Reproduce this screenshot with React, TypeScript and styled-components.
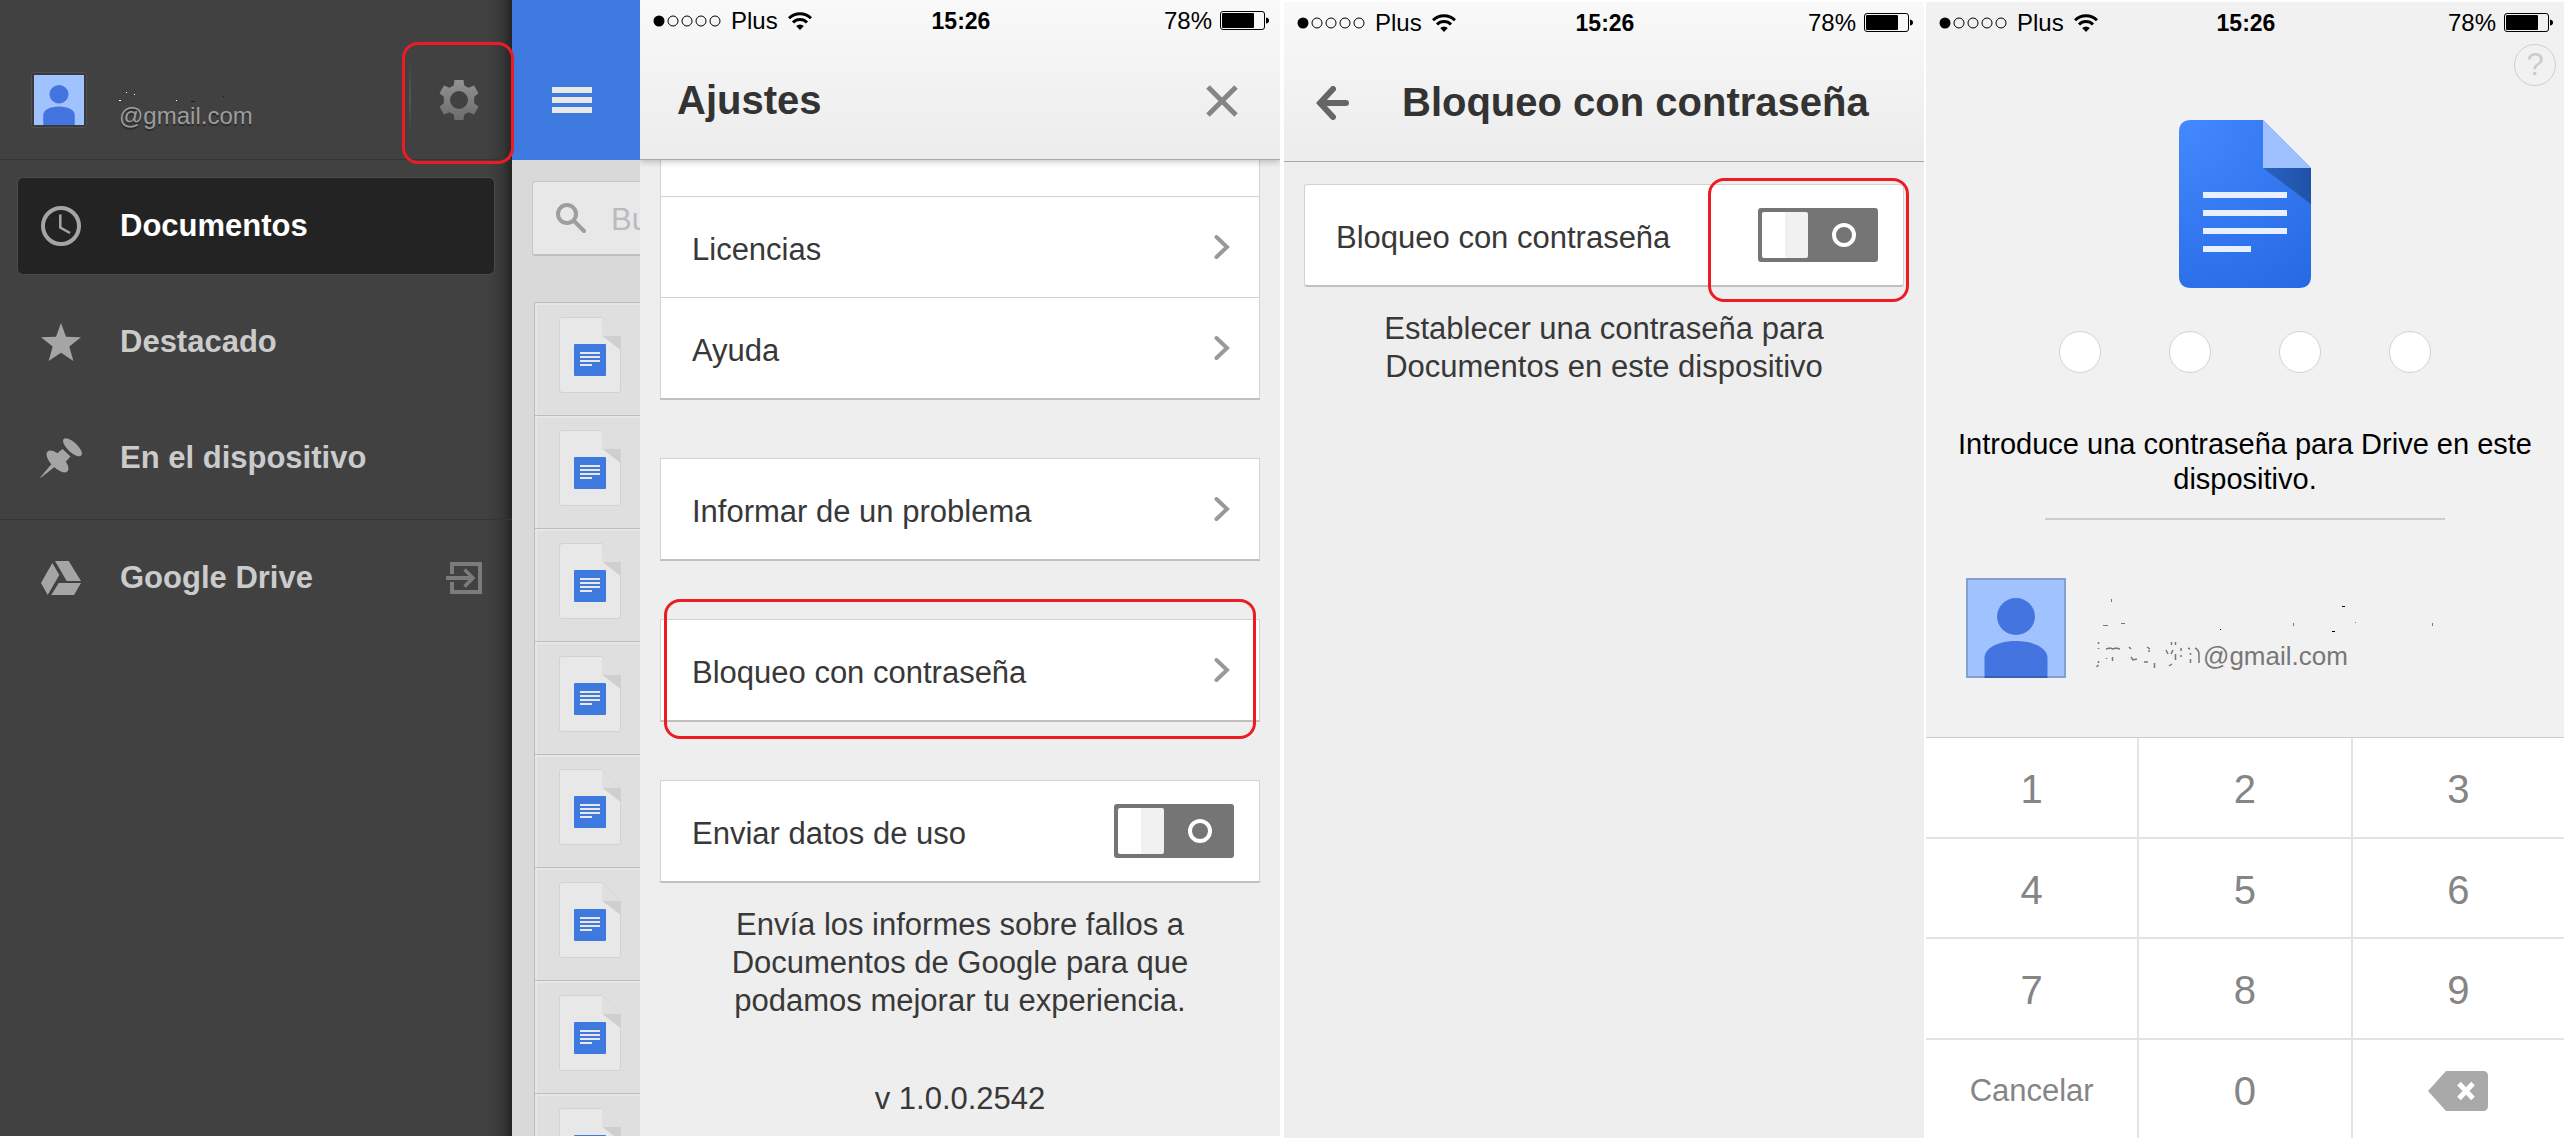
import React from "react";
import styled, { createGlobalStyle, css } from "styled-components";

const GlobalStyle = createGlobalStyle`
  *, *::before, *::after { box-sizing: border-box; }
  body {
    margin: 0;
    background: #fff;
    color: #383838;
    font-family: "Liberation Sans", Arial, sans-serif;
    font-size: 31px;
  }
  button, input { font: inherit; color: inherit; }
  button { padding: 0; border: 0; background: none; cursor: pointer; }
  h1, p { margin: 0; }
  svg { display: block; flex: none; }
`;

const Board = styled.main`
  display: grid;
  grid-template-columns: minmax(0, 640fr) minmax(0, 644fr) minmax(0, 642fr) minmax(0, 638fr);
  grid-template-rows: minmax(0, 1fr);
  height: 100vh;
  padding-bottom: 8px;
`;

const Screen = styled.section<{ $lowered?: boolean; $gap?: number; $tone?: string }>`
  display: flex;
  flex-direction: column;
  min-width: 0;
  margin: ${(p) => (p.$lowered ? "2px 0 0" : "0 0 2px")};
  margin-right: ${(p) => p.$gap ?? 0}px;
  background: ${(p) => p.$tone ?? "#eeeeee"};
`;

/* ---------- Drawer ---------- */

const DrawerScreen = styled(Screen)`
  flex-direction: row;
`;

const Drawer = styled.aside`
  position: relative;
  z-index: 1;
  flex: 4;
  min-width: 0;
  background: linear-gradient(to left, #242424 0, #383838 10px, #414141 24px);
  color: #cbcbcb;
`;

const Account = styled.header`
  display: flex;
  align-items: center;
  height: 160px;
  padding: 40px 0 0 31px;
  border-bottom: 1px solid #353535;
`;

const AvatarFrame = styled.div`
  padding: 2px;
  border: 1px solid #505050;
  border-radius: 3px;
  background: #3a3a3a;
`;

const AccountText = styled.div`
  flex: 1;
  padding-left: 32px;
  font-size: 24px;
  line-height: 28px;
  color: #9c9c9c;
  text-shadow: 0 2px 1px #2a2a2a;
`;

const GearButton = styled.button`
  position: relative;
  display: flex;
  align-items: center;
  justify-content: center;
  align-self: stretch;
  width: 103px;
  padding-right: 3px;

  &::before {
    content: "";
    position: absolute;
    left: 0;
    top: 22px;
    bottom: 26px;
    width: 2px;
    background: linear-gradient(#414141, #565656, #414141);
  }
`;

const Highlight = styled.span<{ $inset: string }>`
  position: absolute;
  inset: ${(p) => p.$inset};
  z-index: 2;
  border: 3px solid #ed1c24;
  border-radius: 16px;
  pointer-events: none;
`;

const Nav = styled.nav`
  display: flex;
  flex-direction: column;
  gap: 20px;
  padding: 18px 18px 13px;
`;

const NavFooter = styled(Nav)`
  padding-top: 10px;
  border-top: 1px solid #353535;
`;

const NavItem = styled.a<{ $active?: boolean }>`
  display: flex;
  align-items: center;
  height: 96px;
  padding: 0 12px 0 22px;
  border-radius: 5px;
  color: inherit;
  font-weight: bold;
  text-decoration: none;
  ${(p) =>
    p.$active &&
    css`
      background: #232323;
      color: #fff;
      box-shadow: 0 0 0 1px #4a4a4a;
    `}
`;

const NavIcon = styled.span`
  display: flex;
  justify-content: center;
  width: 42px;
`;

const NavLabel = styled.span`
  flex: 1;
  padding-left: 38px;
  white-space: nowrap;
`;

const Backdrop = styled.div`
  display: flex;
  flex: 1;
  flex-direction: column;
  min-width: 0;
  overflow: hidden;
  background: #d9d9d9;
`;

const Toolbar = styled.div`
  display: flex;
  align-items: center;
  flex: none;
  height: 160px;
  padding: 40px 0 0 40px;
  background: #3e79df;
`;

const Search = styled.label`
  display: flex;
  align-items: center;
  flex: none;
  height: 75px;
  margin: 21px 0 46px 20px;
  padding-left: 23px;
  border: 1px solid #c6c6c6;
  border-right: 0;
  border-bottom: 2px solid #bfbfbf;
  border-radius: 3px 0 0 3px;
  background: #e8e8e8;
`;

const SearchInput = styled.input`
  flex: 1;
  min-width: 0;
  margin-left: 25px;
  padding: 3px 0 0;
  border: 0;
  outline: 0;
  background: none;
  &::placeholder { color: #b9bbbf; opacity: 1; }
`;

const FileList = styled.ul`
  flex: 1;
  min-height: 0;
  margin: 0 0 0 22px;
  padding: 0;
  overflow: hidden;
  list-style: none;
  border-left: 1px solid #bdbdbd;
`;

const FileRow = styled.li`
  height: 113px;
  padding: 14px 0 0 24px;
  border-top: 1px solid #bdbdbd;
  background: #dfdfdf;
  box-shadow: inset 2px 2px 0 #e7e7e7;
`;

/* ---------- Phone chrome ---------- */

const StatusBarBox = styled.div`
  display: grid;
  grid-template-columns: 1fr auto 1fr;
  align-items: center;
  flex: none;
  height: 42px;
  padding: 0 11px 0 13px;
  color: #000;
  font-size: 24px;
  line-height: 28px;
`;

const StatusSide = styled.div<{ $end?: boolean }>`
  display: flex;
  align-items: center;
  gap: ${(p) => (p.$end ? 8 : 10)}px;
  justify-content: ${(p) => (p.$end ? "flex-end" : "flex-start")};
`;

const Clock = styled.span`
  font-size: 23px;
  font-weight: bold;
`;

const TopBar = styled.header<{ $shadow?: boolean }>`
  position: relative;
  z-index: 1;
  flex: none;
  height: 160px;
  border-bottom: 1px solid #a9a9a9;
  background: linear-gradient(#f9f9f9, #ececec);
  clip-path: inset(0 0 -12px);
  box-shadow: ${(p) => (p.$shadow ? "0 2px 6px rgba(0, 0, 0, 0.22)" : "none")};
`;

const TitleRow = styled.div<{ $back?: boolean }>`
  display: flex;
  align-items: center;
  justify-content: ${(p) => (p.$back ? "flex-start" : "space-between")};
  gap: 52px;
  height: 117px;
  padding: 0 42px 0 ${(p) => (p.$back ? 32 : 37)}px;
`;

const Title = styled.h1`
  color: #333;
  font-size: 40px;
  font-weight: bold;
  white-space: nowrap;
`;

/* ---------- Settings ---------- */

const Card = styled.div<{ $flush?: boolean; $first?: boolean }>`
  position: relative;
  flex: none;
  margin: ${(p) => (p.$flush ? 0 : p.$first ? 22 : 58)}px 20px 0;
  border: 1px solid #d2d2d2;
  border-top-width: ${(p) => (p.$flush ? 0 : 1)}px;
  border-bottom: 2px solid #c0c0c0;
  border-radius: ${(p) => (p.$first ? 3 : 0)}px;
  background: #fff;
`;

const CutRow = styled.div`
  height: 37px;
  border-bottom: 1px solid #d2d2d2;
`;

const rowStyles = css`
  display: flex;
  align-items: center;
  justify-content: space-between;
  width: 100%;
  height: 100px;
  padding-left: 31px;
  text-align: left;
`;

const LinkRow = styled.button<{ $divided?: boolean }>`
  ${rowStyles}
  padding-right: 29px;
  ${(p) =>
    p.$divided &&
    css`
      height: 101px;
      border-bottom: 1px solid #d2d2d2;
    `}
`;

const SwitchRow = styled.label`
  ${rowStyles}
  padding-right: 25px;
`;

const RowText = styled.span`
  padding-top: 6px;
`;

const Switch = styled.input.attrs({ type: "checkbox", role: "switch" })`
  appearance: none;
  display: flex;
  align-items: center;
  justify-content: space-between;
  width: 120px;
  height: 54px;
  margin: 0;
  padding: 0 22px 0 4px;
  border-radius: 3px;
  background: #757575;
  cursor: pointer;

  &::before {
    content: "";
    width: 46px;
    height: 46px;
    border-radius: 2px;
    background: linear-gradient(to right, #fff 50%, #f1f1f1 50%);
  }
  &::after {
    content: "";
    width: 24px;
    height: 24px;
    border: 4px solid #fff;
    border-radius: 50%;
  }
`;

const Note = styled.p`
  width: 100%;
  max-width: 480px;
  margin: 23px auto 0;
  line-height: 38px;
  text-align: center;
`;

const Version = styled(Note)`
  margin-top: 60px;
`;

/* ---------- Passcode ---------- */

const HelpButton = styled.button`
  align-self: flex-end;
  flex: none;
  width: 42px;
  height: 42px;
  margin-right: 8px;
  border: 1px solid #cfcfcf;
  border-radius: 50%;
  color: #cbcbcb;
  line-height: 40px;
`;

const LogoBox = styled.div`
  display: flex;
  justify-content: center;
  padding: 34px 0 43px;
`;

const Pins = styled.div`
  display: flex;
  justify-content: center;
  gap: 68px;
`;

const Pin = styled.input.attrs({ type: "password", maxLength: 1 })`
  width: 42px;
  height: 42px;
  padding: 0;
  border: 1px solid #d3d3d3;
  border-radius: 50%;
  outline: 0;
  background: #fff;
  text-align: center;
`;

const Prompt = styled.p`
  margin: 54px 0 21px;
  padding: 0 24px;
  color: #000;
  font-size: 29px;
  line-height: 35px;
  text-align: center;
`;

const Rule = styled.hr`
  width: 400px;
  height: 2px;
  margin: 0 auto 58px;
  border: 0;
  background: #cdcdcd;
`;

const Owner = styled.div`
  display: flex;
  align-items: flex-end;
  gap: 30px;
  padding: 0 40px;
`;

const OwnerText = styled.div`
  padding-bottom: 7px;
  color: #777;
  font-size: 26px;
  line-height: 30px;
`;

const MailLine = styled.div`
  display: flex;
  align-items: center;
`;

const Keypad = styled.div`
  display: grid;
  grid-template-columns: repeat(3, 1fr);
  grid-template-rows: repeat(4, 1fr);
  gap: 2px;
  height: 401px;
  margin-top: auto;
  border-top: 1px solid #cdcdcd;
  background: #e3e3e3;
`;

const Key = styled.button<{ $small?: boolean }>`
  display: flex;
  align-items: center;
  justify-content: center;
  padding-top: 5px;
  background: #fff;
  color: #858585;
  font-size: ${(p) => (p.$small ? 31 : 40)}px;
`;

/* ---------- Drawings ---------- */

const Avatar = ({ size, outlined }: { size: number; outlined?: boolean }) => (
  <svg width={size} height={size} viewBox="0 0 100 100" aria-hidden="true">
    <rect width="100" height="100" fill="#a0c2ff" />
    <ellipse cx="50" cy="38.500" rx="19" ry="18.500" fill="#4474e0" />
    <path d="M18.500 100V80C18.500 70 32 63 50 63s31.500 7 31.500 17v20z" fill="#4474e0" />
    {outlined && <rect x="1" y="1" width="98" height="98" fill="none" stroke="#000" strokeOpacity="0.18" strokeWidth="2" />}
  </svg>
);

const GearIcon = () => (
  <svg width="40" height="42" viewBox="-20 -21 40 42" aria-hidden="true">
    <defs>
      <linearGradient id="gear" gradientUnits="userSpaceOnUse" x1="0" y1="-20" x2="0" y2="20">
        <stop offset="0" stopColor="#929292" />
        <stop offset="1" stopColor="#6c6c6c" />
      </linearGradient>
    </defs>
    <path
      fill="url(#gear)"
      fillRule="evenodd"
      d="M-4.500 -20H4.500L5.300 -14.500L9.500 -12.200L15 -14.500L19.500 -6.800L15.200 -3.200V3.200L19.500 6.800L15 14.500L9.500 12.200L5.300 14.500L4.500 20H-4.500L-5.300 14.500L-9.500 12.200L-15 14.500L-19.500 6.800L-15.200 3.200V-3.200L-19.500 -6.800L-15 -14.500L-9.500 -12.200L-5.300 -14.500ZM0 -9A9 9 0 1 0 0 9A9 9 0 1 0 0 -9Z"
    />
  </svg>
);

const ClockIcon = () => (
  <svg width="40" height="40" viewBox="0 0 40 40" fill="none" stroke="#a5a5a5" aria-hidden="true">
    <circle cx="20" cy="20" r="18" strokeWidth="4" />
    <path d="M19.300 8.500V21.500L29 27" strokeWidth="2.500" />
  </svg>
);

const StarIcon = () => (
  <svg width="40" height="38" viewBox="0 0 40 38" fill="#a5a5a5" aria-hidden="true">
    <path d="M20 0l5 13.800 15 .5-11.700 9.200L32.400 38 20 29.700 7.600 38l4.100-14.500L0 14.300l15-.5z" />
  </svg>
);

const PinIcon = () => (
  <svg width="42" height="40" viewBox="0 0 42 40" fill="#a5a5a5" aria-hidden="true">
    <ellipse cx="32.500" cy="9.300" rx="12" ry="5" transform="rotate(43 32.500 9.300)" />
    <path d="M22.500 11L30.500 18.500L25.500 24L17 15.500Z" />
    <path d="M23 8.500l9.500 9.500" stroke="#414141" strokeWidth="1" />
    <ellipse cx="17.500" cy="23.500" rx="14" ry="6.500" transform="rotate(45 17.500 23.500)" />
    <path d="M11.500 26l3 3L.500 40l-.3-.5z" />
  </svg>
);

const DriveIcon = () => (
  <svg width="40" height="34" viewBox="0 0 40 34" fill="#a5a5a5" aria-hidden="true">
    <path d="M0 22L11.300 2l7 12L6.700 34zM14 0h13.700L40 20H25.700zM17.700 22H40l-7 12H10.300z" />
  </svg>
);

const ExitIcon = () => (
  <svg width="36" height="32" viewBox="0 0 36 32" fill="none" stroke="#7b7b7b" strokeWidth="4" aria-hidden="true">
    <path d="M6 12V2h28v28H6V20M0 16h26" />
    <path d="M18.500 7.500L27 16l-8.500 8.500" strokeWidth="3.500" />
  </svg>
);

const MenuIcon = () => (
  <svg width="40" height="26" viewBox="0 0 40 26" fill="#e8e8e8" aria-hidden="true">
    <path d="M0 0h40v6H0zM0 10h40v6H0zM0 20h40v6H0z" />
  </svg>
);

const SearchIcon = () => (
  <svg width="30" height="30" viewBox="0 0 30 30" fill="none" stroke="#9e9e9e" aria-hidden="true">
    <circle cx="11" cy="11" r="9" strokeWidth="4" />
    <path d="M18 18l10 10" strokeWidth="4" strokeLinecap="round" />
  </svg>
);

const FileIcon = () => (
  <svg width="62" height="76" viewBox="0 0 62 76" aria-hidden="true">
    <path d="M3 .5h40L61.500 19v54q0 2.500-2.500 2.500H3Q.5 75.500.5 73V3Q.5.5 3 .5z" fill="#e8e8e8" stroke="#d2d2d2" />
    <path d="M43 .5L61.500 19H43z" fill="#dfdfdf" />
    <path d="M43.500 19h18v14z" fill="#cfcfcf" />
    <rect x="15" y="27" width="32" height="32" rx="1" fill="#3e79df" />
    <path d="M21 35h20v2H21zM21 39h20v2H21zM21 43h20v2H21zM21 47h12v2H21z" fill="#e8e8e8" />
  </svg>
);

const DocsLogo = () => (
  <svg width="132" height="168" viewBox="0 0 132 168" role="img" aria-label="Documentos de Google">
    <defs>
      <radialGradient id="page" gradientUnits="userSpaceOnUse" cx="0" cy="0" r="210">
        <stop offset="0" stopColor="#4489ff" />
        <stop offset="1" stopColor="#256ae3" />
      </radialGradient>
      <linearGradient id="fold" x1="0" y1="0" x2="1" y2="0">
        <stop offset="0" stopColor="#2a62c2" />
        <stop offset="1" stopColor="#1f52a8" />
      </linearGradient>
    </defs>
    <path d="M12 0H84L132 48V156Q132 168 120 168H12Q0 168 0 156V12Q0 0 12 0Z" fill="url(#page)" />
    <path d="M84 0L132 48H84Z" fill="#9fc1ff" />
    <path d="M84 48H132V84Z" fill="url(#fold)" />
    <path d="M24 72h84v6H24zM24 90h84v6H24zM24 108h84v6H24zM24 126h48v6H24z" fill="#e9f0fd" />
  </svg>
);

const CloseIcon = () => (
  <svg width="32" height="32" viewBox="0 0 32 32" stroke="#858583" strokeWidth="5" aria-hidden="true">
    <path d="M2 2l28 28M30 2L2 30" />
  </svg>
);

const BackIcon = () => (
  <svg width="34" height="34" viewBox="0 0 34 34" fill="none" stroke="#666" strokeWidth="6" strokeLinecap="round" aria-hidden="true">
    <path d="M17 3L4 17l13 14" strokeLinejoin="miter" />
    <path d="M5 17h25" />
  </svg>
);

const Chevron = () => (
  <svg width="16" height="26" viewBox="0 0 16 26" fill="none" stroke="#999" strokeWidth="4" strokeLinecap="round" aria-hidden="true">
    <path d="M2.500 3L13 13 2.500 23" />
  </svg>
);

const SignalDots = () => (
  <svg width="68" height="12" viewBox="0 0 68 12" fill="none" stroke="#000" aria-hidden="true">
    <circle cx="6" cy="6" r="5.500" fill="#000" stroke="none" />
    {[20, 34, 48, 62].map((x) => (
      <circle key={x} cx={x} cy="6" r="5" />
    ))}
  </svg>
);

const WifiIcon = () => (
  <svg width="24" height="18" viewBox="0 0 24 18" fill="none" stroke="#000" aria-hidden="true">
    <path d="M1 6.300a15.500 15.500 0 0 1 22 0" strokeWidth="3" />
    <path d="M5 10.500a9.800 9.800 0 0 1 14 0" strokeWidth="3" />
    <path d="M12 18l-3.800-4a5.500 5.500 0 0 1 7.600 0z" fill="#000" stroke="none" />
  </svg>
);

const BatteryIcon = () => (
  <svg width="49" height="20" viewBox="0 0 49 20" aria-hidden="true">
    <rect x="0.500" y="0.500" width="44" height="18" rx="2.500" fill="none" stroke="#000" />
    <rect x="2" y="2" width="32" height="15" rx="1" fill="#000" />
    <path d="M46 6.500q3 .5 3 3t-3 3z" />
  </svg>
);

const DeleteIcon = () => (
  <svg width="60" height="40" viewBox="0 0 60 40" aria-hidden="true">
    <path d="M0 20L18 0h37q5 0 5 5v30q0 5-5 5H18z" fill="#a9a9a9" />
    <path d="M31 12.500l14 15M45 12.500l-14 15" stroke="#fff" strokeWidth="5" />
  </svg>
);

/* Leftover flecks of the erased account names. */
const DrawerFlecks = () => (
  <svg width="120" height="32" viewBox="0 0 120 32" aria-hidden="true">
    <path d="M7 22h1v1H7zM15 24h1v1h-1zM-1 30h3v1h-3zM57 30h1v1h-1z" fill="#fff" />
    <path d="M72 31h4v1h-4zM104 26h1v1h-1z" fill="#1c1c1c" />
  </svg>
);

const NameFlecks = () => (
  <svg width="345" height="43" viewBox="0 0 345 43" aria-hidden="true">
    <path d="M15 1h1v3h-1zM7 27h5v1H7zM25 25h4v1h-4zM197 25h1v3h-1zM259 24h1v1h-1zM336 25h1v3h-1z" fill="#777" />
    <path d="M246 8h3v1h-3zM124 31h1v1h-1zM236 33h3v1h-3z" fill="#000" />
  </svg>
);

const MailFlecks = () => (
  <svg width="107" height="28" viewBox="0 0 107 28" fill="none" stroke="#777" strokeWidth="1.500" aria-hidden="true">
    <path d="M2.500 0v2M2.500 6v1M.5 25l2-2M2.500 19v2M10 7l4-1 3 1 3-1 4 1M10.500 16v1M16.500 15v4M33 5l2 2M35 15l2 3 4-1M51 5l3 2M48 20h4M53 8v2M58.500 21v5M70 8l2 4M75.500 0v3M79.500 0v3M73 24l3-2M77 8l-2 4M79.500 12v6M85 6v3M85 13v2M92 6l2 1M94.500 11v2M94.500 17v4M99 6q4 2 4 6v9" />
  </svg>
);

/* ---------- Screens ---------- */

const StatusBar = () => (
  <StatusBarBox>
    <StatusSide>
      <SignalDots />
      <span>Plus</span>
      <WifiIcon />
    </StatusSide>
    <Clock>15:26</Clock>
    <StatusSide $end>
      <span>78%</span>
      <BatteryIcon />
    </StatusSide>
  </StatusBarBox>
);

const NAV = [
  { label: "Documentos", icon: <ClockIcon />, active: true },
  { label: "Destacado", icon: <StarIcon /> },
  { label: "En el dispositivo", icon: <PinIcon /> },
];

const KEYS = ["1", "2", "3", "4", "5", "6", "7", "8", "9"];

export default function App() {
  return (
    <>
      <GlobalStyle />
      <Board>
        <DrawerScreen>
          <Drawer>
            <Account>
              <AvatarFrame>
                <Avatar size={50} />
              </AvatarFrame>
              <AccountText>
                <DrawerFlecks />
                @gmail.com
              </AccountText>
              <GearButton aria-label="Ajustes">
                <GearIcon />
                <Highlight $inset="2px -2px -5px -7px" />
              </GearButton>
            </Account>
            <Nav>
              {NAV.map((n) => (
                <NavItem key={n.label} href="#" $active={n.active}>
                  <NavIcon>{n.icon}</NavIcon>
                  <NavLabel>{n.label}</NavLabel>
                </NavItem>
              ))}
            </Nav>
            <NavFooter>
              <NavItem href="#">
                <NavIcon>
                  <DriveIcon />
                </NavIcon>
                <NavLabel>Google Drive</NavLabel>
                <ExitIcon />
              </NavItem>
            </NavFooter>
          </Drawer>
          <Backdrop>
            <Toolbar>
              <button aria-label="Menú">
                <MenuIcon />
              </button>
            </Toolbar>
            <Search>
              <SearchIcon />
              <SearchInput type="text" placeholder="Bu" aria-label="Buscar" />
            </Search>
            <FileList>
              {Array.from({ length: 8 }, (_, i) => (
                <FileRow key={i}>
                  <FileIcon />
                </FileRow>
              ))}
            </FileList>
          </Backdrop>
        </DrawerScreen>

        <Screen $gap={4}>
          <TopBar $shadow>
            <StatusBar />
            <TitleRow>
              <Title>Ajustes</Title>
              <button aria-label="Cerrar">
                <CloseIcon />
              </button>
            </TitleRow>
          </TopBar>
          <Card $flush>
            <CutRow />
            <LinkRow $divided>
              <RowText>Licencias</RowText>
              <Chevron />
            </LinkRow>
            <LinkRow>
              <RowText>Ayuda</RowText>
              <Chevron />
            </LinkRow>
          </Card>
          <Card>
            <LinkRow>
              <RowText>Informar de un problema</RowText>
              <Chevron />
            </LinkRow>
          </Card>
          <Card>
            <LinkRow>
              <RowText>Bloqueo con contraseña</RowText>
              <Chevron />
            </LinkRow>
            <Highlight $inset="-21px 3px -19px 3px" />
          </Card>
          <Card>
            <SwitchRow>
              <RowText>Enviar datos de uso</RowText>
              <Switch />
            </SwitchRow>
          </Card>
          <Note>Envía los informes sobre fallos a Documentos de Google para que podamos mejorar tu experiencia.</Note>
          <Version>v 1.0.0.2542</Version>
        </Screen>

        <Screen $lowered $gap={2}>
          <TopBar>
            <StatusBar />
            <TitleRow $back>
              <button aria-label="Atrás">
                <BackIcon />
              </button>
              <Title>Bloqueo con contraseña</Title>
            </TitleRow>
          </TopBar>
          <Card $first>
            <SwitchRow>
              <RowText>Bloqueo con contraseña</RowText>
              <Switch />
            </SwitchRow>
            <Highlight $inset="-7px -6px -17px 403px" />
          </Card>
          <Note>Establecer una contraseña para Documentos en este dispositivo</Note>
        </Screen>

        <Screen $lowered $tone="#f1f1f1">
          <StatusBar />
          <HelpButton aria-label="Ayuda">?</HelpButton>
          <LogoBox>
            <DocsLogo />
          </LogoBox>
          <Pins>
            {[1, 2, 3, 4].map((n) => (
              <Pin key={n} aria-label={`Dígito ${n}`} />
            ))}
          </Pins>
          <Prompt>Introduce una contraseña para Drive en este dispositivo.</Prompt>
          <Rule />
          <Owner>
            <Avatar size={100} outlined />
            <OwnerText>
              <NameFlecks />
              <MailLine>
                <MailFlecks />
                @gmail.com
              </MailLine>
            </OwnerText>
          </Owner>
          <Keypad>
            {KEYS.map((k) => (
              <Key key={k}>{k}</Key>
            ))}
            <Key $small>Cancelar</Key>
            <Key>0</Key>
            <Key aria-label="Borrar">
              <DeleteIcon />
            </Key>
          </Keypad>
        </Screen>
      </Board>
    </>
  );
}
